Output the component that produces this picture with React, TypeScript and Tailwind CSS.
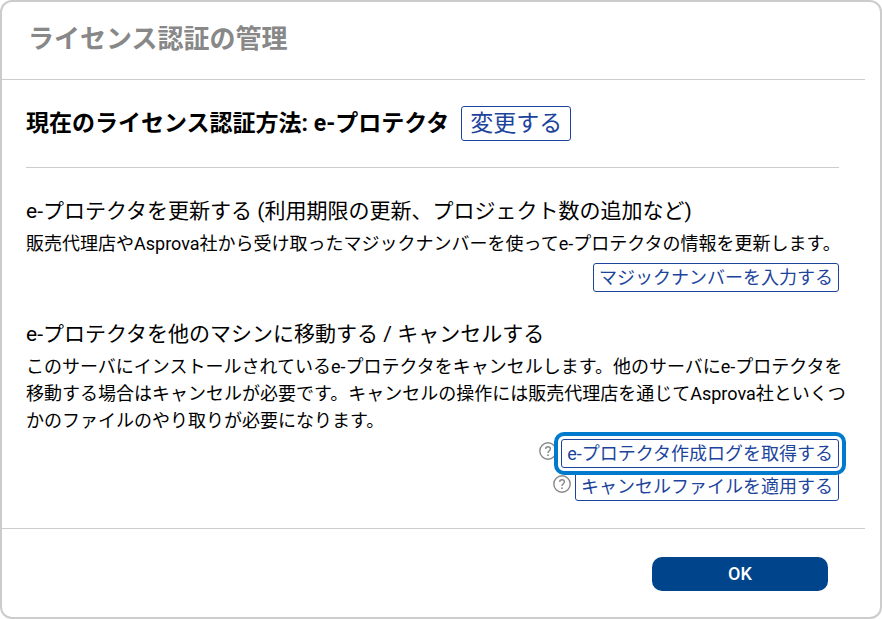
import { ReactNode } from "react";
import { clsx } from "clsx";

function HelpIcon() {
  return (
    <svg viewBox="0 0 20 20" className="mt-0.5 size-5 shrink-0" aria-hidden="true">
      <circle cx="10" cy="10" r="8.2" fill="none" stroke="#888" strokeWidth="1.4" />
      <path
        d="M7.6 7.9c.1-1.4 1.1-2.2 2.4-2.2s2.4.8 2.4 2.1c0 1.9-2.4 2-2.4 4.2"
        fill="none"
        stroke="#888"
        strokeWidth="1.4"
      />
      <circle cx="10" cy="14.2" r="0.9" fill="#888" />
    </svg>
  );
}

function ActionButton({ children, highlighted = false }: { children: ReactNode; highlighted?: boolean }) {
  return (
    <button
      type="button"
      className={clsx(
        "rounded-[3px] border border-[#1c449c] bg-white px-[5px] text-lg leading-[27px] whitespace-nowrap text-[#1c449c]",
        highlighted && "relative z-10 outline-4 outline-offset-[3px] outline-[#007acc]"
      )}
    >
      {children}
    </button>
  );
}

export default function App() {
  return (
    <main className="min-h-screen rounded-xl border-2 border-[#ccc] bg-white font-[Roboto,'Noto_Sans_CJK_JP',sans-serif] text-black">
      <header className="mr-[15px] border-b border-[#ccc] pt-[17px] pr-[26px] pb-5 pl-[26px]">
        <h1 className="text-[26px] leading-10 font-bold text-[#888]">ライセンス認証の管理</h1>
      </header>

      <div className="mr-[15px] border-b border-[#ccc] pr-[26px] pb-[27px] pl-6">
        <section className="flex items-center gap-3 border-b border-[#ccc] py-[26px]">
          <h2 className="text-[23px] leading-8 font-bold">現在のライセンス認証方法: e-プロテクタ</h2>
          <button
            type="button"
            className="rounded-[3px] border border-[#1c449c] px-2 text-[23px] leading-[33px] whitespace-nowrap text-[#1c449c]"
          >
            変更する
          </button>
        </section>

        <section className="pt-[26px]">
          <h3 className="text-[21px] leading-[34px]">
            e-プロテクタを更新する (利用期限の更新、プロジェクト数の追加など)
          </h3>
          <p className="mt-0.5 -mr-3 text-lg leading-[27px]">
            販売代理店やAsprova社から受け取ったマジックナンバーを使ってe-プロテクタの情報を更新します。
          </p>
          <div className="mt-1.5 flex justify-end">
            <ActionButton>マジックナンバーを入力する</ActionButton>
          </div>
        </section>

        <section className="pt-[25px]">
          <h3 className="text-[21px] leading-[34px]">e-プロテクタを他のマシンに移動する / キャンセルする</h3>
          <p className="mt-0.5 -mr-3 text-lg leading-[27px]">
            このサーバにインストールされているe-プロテクタをキャンセルします。他のサーバにe-プロテクタを移動する場合はキャンセルが必要です。キャンセルの操作には販売代理店を通じてAsprova社といくつかのファイルのやり取りが必要になります。
          </p>
          <div className="mt-[5px] flex flex-col items-end gap-1">
            <div className="flex gap-[3px]">
              <HelpIcon />
              <ActionButton highlighted>e-プロテクタ作成ログを取得する</ActionButton>
            </div>
            <div className="flex gap-[3px]">
              <HelpIcon />
              <ActionButton>キャンセルファイルを適用する</ActionButton>
            </div>
          </div>
        </section>
      </div>

      <footer className="flex justify-end px-13 pt-7 pb-6">
        <button type="button" className="w-44 rounded-[10px] bg-[#00448c] text-lg leading-[34px] font-medium text-white">
          OK
        </button>
      </footer>
    </main>
  );
}
